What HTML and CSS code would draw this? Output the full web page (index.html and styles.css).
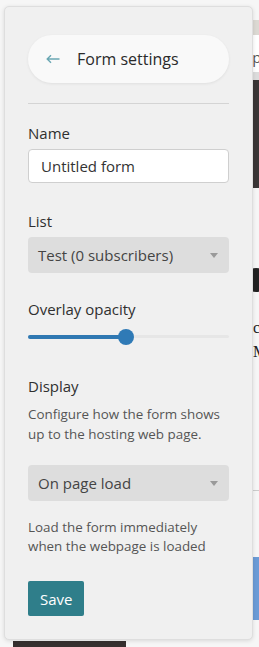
FILE: index.html
```html
<!DOCTYPE html>
<html lang="en">
<head>
    <meta charset="UTF-8">
    <meta name="viewport" content="width=device-width, initial-scale=1.0">
    <title>Form settings</title>
    <link rel="stylesheet" href="styles.css">
</head>
<body>

    <!-- Page behind the settings panel -->
    <div class="page">
        <div class="page-bar"></div>
        <div class="page-text">Export</div>
        <div class="page-hero"></div>
        <div class="page-dot"></div>
        <div class="page-line">c</div>
        <div class="page-line">M</div>
        <div class="page-rule"></div>
        <div class="page-button"></div>
        <div class="page-footer"></div>
    </div>

    <div class="panel">
        <div class="panel-head">
            <button class="back-btn">
                <svg class="back-icon" width="14" height="10" viewBox="0 0 14 10">
                    <path d="M13.5 5H1.5M5 1.2L1.2 5L5 8.8" fill="none" stroke="#6aa7b3" stroke-width="1.4"/>
                </svg>
                <span>Form settings</span>
            </button>
        </div>

        <div class="field field-name">
            <label class="field-label" for="name">Name</label>
            <input class="text-input" type="text" id="name" value="Untitled form">
        </div>

        <div class="field">
            <div class="field-label">List</div>
            <div class="select">
                <span>Test (0 subscribers)</span>
                <span class="caret"></span>
            </div>
        </div>

        <div class="field">
            <div class="field-label">Overlay opacity</div>
            <div class="slider">
                <div class="slider-fill" style="width: 49%"></div>
                <div class="slider-thumb" style="left: 49%"></div>
            </div>
        </div>

        <div class="field field-display">
            <div class="field-label">Display</div>
            <p class="hint hint-top">Configure how the form shows up to the hosting web page.</p>
            <div class="select">
                <span>On page load</span>
                <span class="caret"></span>
            </div>
            <p class="hint hint-bottom">Load the form immediately when the webpage is loaded</p>
        </div>

        <button class="save-btn">Save</button>
    </div>

</body>
</html>
```

FILE: styles.css
```css
body {
    margin: 0;
    padding: 0;
    font-family: "Open Sans", Arial, sans-serif;
    background-color: #f6f6f6;
    color: #333;
    overflow: hidden;
    height: 647px;
}

/* background page (only a sliver shows at the right) */
.page {
    padding-top: 20px;
}
.page-bar {
    height: 15px;
    margin-left: 200px;
    background-color: #dcd9d3;
}
.page-text {
    height: 37px;
    line-height: 44px;
    margin-left: 200px;
    padding-left: 36px;
    font-size: 15px;
    color: #555;
    background-color: #fff;
    white-space: nowrap;
    overflow: hidden;
}
.page-hero {
    height: 108px;
    margin-left: 200px;
    border-top: 8px solid #dcdcdc;
    background-color: #3a3636;
}
.page-dot {
    width: 24px;
    height: 24px;
    margin: 80px 0 0 244px;
    border-radius: 50%;
    background-color: #222;
}
.page-line {
    margin-left: 253px;
    font-family: "Liberation Serif", serif;
    font-size: 16px;
    line-height: 24px;
    color: #222;
}
.page-dot + .page-line {
    margin-top: 24px;
}
.page-rule {
    height: 1px;
    margin: 126px 0 0 200px;
    background-color: #ccc;
}
.page-button {
    height: 63px;
    margin: 66px 0 0 200px;
    background-color: #6b9bd6;
}
.page-footer {
    width: 113px;
    height: 30px;
    margin: 21px 0 0 13px;
    background-color: #36302f;
}

/* settings panel */
.panel {
    position: absolute;
    left: 4px;
    top: 6px;
    width: 201px;
    height: 604px;
    padding: 28px 23px 0;
    background-color: #f0f0f0;
    border: 1px solid #dedede;
    border-radius: 5px;
    box-shadow: 0 1px 4px rgba(0, 0, 0, 0.12);
}

.panel-head {
    padding-bottom: 20px;
    border-bottom: 1px solid #d4d4d4;
    margin-bottom: 19px;
}

.back-btn {
    display: flex;
    align-items: center;
    width: 100%;
    height: 48px;
    padding: 0 0 0 18px;
    border: none;
    border-radius: 24px;
    background-color: #f9f9f9;
    box-shadow: 0 1px 3px rgba(0, 0, 0, 0.07);
    font-family: inherit;
    font-size: 16px;
    color: #2a2a2a;
    cursor: pointer;
}
.back-icon {
    margin-right: 17px;
}

.field {
    margin-bottom: 26px;
}
.field-name {
    margin-bottom: 28px;
}
.field-label {
    display: block;
    font-size: 15px;
    line-height: 20px;
    color: #2f2f2f;
    margin-bottom: 6px;
}

.text-input {
    box-sizing: border-box;
    width: 100%;
    height: 34px;
    padding: 0 12px;
    border: 1px solid #cfcfcf;
    border-radius: 4px;
    background-color: #fff;
    font-family: inherit;
    font-size: 15px;
    color: #333;
}

.select {
    display: flex;
    justify-content: space-between;
    align-items: center;
    height: 36px;
    padding: 0 11px 0 10px;
    border-radius: 4px;
    background-color: #dddddd;
    font-size: 15px;
    color: #444;
}
.caret {
    width: 0;
    height: 0;
    border-left: 4px solid transparent;
    border-right: 4px solid transparent;
    border-top: 5px solid #999;
}

.slider {
    position: relative;
    height: 16px;
    margin-top: 10px;
}
.slider::before {
    content: "";
    position: absolute;
    left: 0;
    right: 0;
    top: 6px;
    height: 3px;
    border-radius: 2px;
    background-color: #e6e6e6;
}
.slider-fill {
    position: absolute;
    left: 0;
    top: 6px;
    height: 4px;
    border-radius: 2px;
    background-color: #2f78b2;
}
.slider-thumb {
    position: absolute;
    top: 0;
    width: 16px;
    height: 16px;
    margin-left: -8px;
    border-radius: 50%;
    background-color: #2f7ab6;
}

.field-display {
    margin-top: 31px;
    margin-bottom: 0;
}
.field-display .field-label {
    margin-bottom: 8px;
}
.hint {
    margin: 0;
    font-size: 13.4px;
    color: #555;
}
.hint-top {
    line-height: 20px;
    margin-bottom: 21px;
}
.hint-bottom {
    line-height: 19px;
    margin-top: 17px;
}

.save-btn {
    margin-top: 25px;
    height: 35px;
    padding: 0 12px;
    border: none;
    border-radius: 2px;
    background-color: #2f7e8a;
    font-family: inherit;
    font-size: 15px;
    color: #fff;
    cursor: pointer;
}
```
